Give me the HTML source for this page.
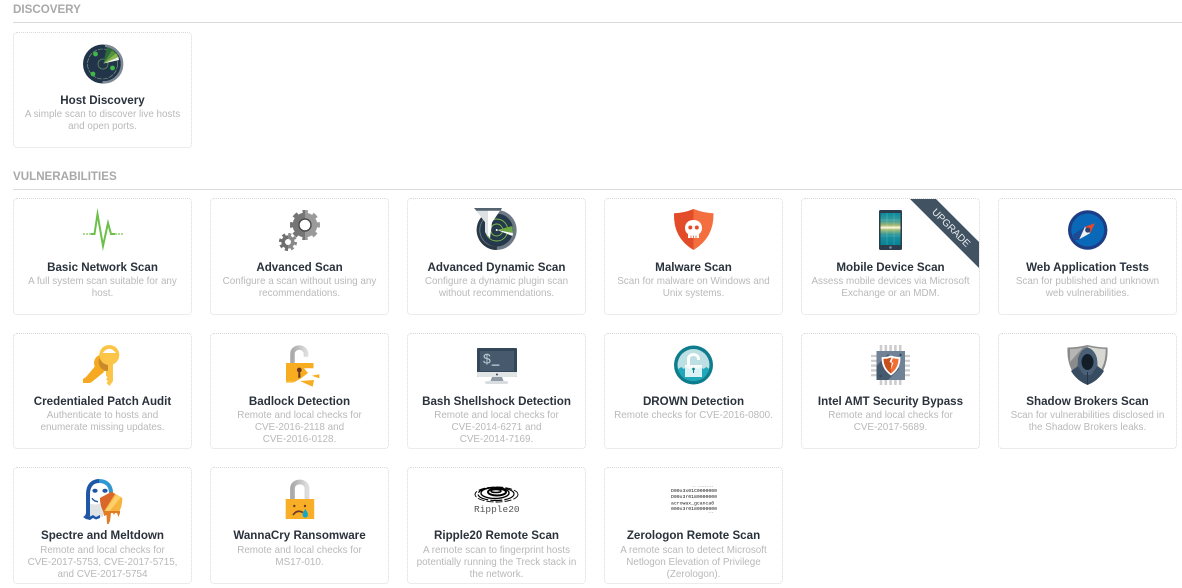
<!DOCTYPE html>
<html><head><meta charset="utf-8"><style>
html,body{margin:0;padding:0;background:#fff;width:1182px;height:588px;overflow:hidden;font-family:"Liberation Sans",sans-serif}
.h{position:absolute;left:13px;width:1169px;height:15px;font-size:11.6px;line-height:15px;font-weight:bold;color:#aaa8a8}
.l{position:absolute;left:13px;width:1169px;height:1px;background:#d9d9d9}
.c{position:absolute;width:179px;height:117px;box-sizing:border-box;border:1px dotted #d8d8d8;border-radius:4px;text-align:center;overflow:hidden}
.c b{position:absolute;left:0;right:0;top:61px;font-size:11.6px;line-height:14px;color:#2a323c;white-space:nowrap}
.c p{position:absolute;left:0;right:0;top:76px;margin:0;font-size:9.88px;line-height:12px;color:#b9b9b9;white-space:nowrap}
.r2 b{top:62px}.r2 p{top:77px}.r4 p{top:77px}
svg.i{position:absolute;left:69px;top:11px;width:40px;height:40px;overflow:visible}
</style></head><body>
<div class="h" style="top:2px">DISCOVERY</div><div class="l" style="top:22px"></div>
<div class="h" style="top:169px">VULNERABILITIES</div><div class="l" style="top:189px"></div>

<div class="c" style="left:13px;top:32px;height:116px">
<svg class="i" viewBox="0 0 40 40"><circle cx="19.500" cy="20" r="19.500" fill="#22344a"/><path d="M22 1.700A18.300 18.300 0 0 1 19.500 38.300" fill="none" stroke="#7c8894" stroke-width="2.600"/><circle cx="19.500" cy="20" r="15" fill="none" stroke="#7fa88a" stroke-width=".6" stroke-dasharray="5 1"/><circle cx="20" cy="20" r="5" fill="none" stroke="#5b8b5b" stroke-width=".8"/><path d="M20.500 19.500L23.700 3Q31 5 35 11Z" fill="#2f6b3a"/><path d="M20.500 19.500L29 6.500 35 11Z" fill="#56933e"/><path d="M20.500 19.500L33 9.500 35.500 13Z" fill="#8ab84f"/><path d="M20.500 19.500L35.500 13 36 16Z" fill="#f2f5ea"/><circle cx="12.500" cy="10" r="2.400" fill="#3fb847"/><circle cx="10" cy="30" r="2.400" fill="#3fb847"/><circle cx="29.500" cy="24" r="2.400" fill="#3fb847"/></svg>
<b>Host Discovery</b><p>A simple scan to discover live hosts<br>and open ports.</p></div>

<div class="c r2" style="left:13px;top:198px">
<svg class="i" viewBox="0 0 40 40"><path d="M0 24H8" stroke="#7cc352" stroke-width="1.200" stroke-dasharray="2 1"/><path d="M32 24H40" stroke="#7cc352" stroke-width="1.200" stroke-dasharray="2 1"/><path d="M8 24H11.500L14.500 4 20 36 25 13 28 24H32" fill="none" stroke="#6cc04a" stroke-width="2" stroke-miterlimit="12"/></svg>
<b>Basic Network Scan</b><p>A full system scan suitable for any<br>host.</p></div>

<div class="c r2" style="left:210px;top:198px">
<svg class="i" viewBox="0 0 40 40"><defs><clipPath id="gl"><rect x="-5" y="-5" width="30" height="50"/></clipPath><clipPath id="gs"><rect x="-5" y="15" width="13" height="35"/></clipPath></defs>
<circle cx="25" cy="15" r="12.300" fill="#9a9a9a"/><circle cx="25" cy="15" r="13.300" fill="none" stroke="#9a9a9a" stroke-width="3.400" stroke-dasharray="5.200 5.250" transform="rotate(-12 25 15)"/>
<g clip-path="url(#gl)"><circle cx="25" cy="15" r="12.300" fill="#757575"/><circle cx="25" cy="15" r="13.300" fill="none" stroke="#757575" stroke-width="3.400" stroke-dasharray="5.200 5.250" transform="rotate(-12 25 15)"/></g>
<circle cx="25" cy="15" r="6" fill="#fff" stroke="#4a4a4a" stroke-width="1.400"/>
<circle cx="8" cy="32" r="6.600" fill="#888"/><circle cx="8" cy="32" r="7.600" fill="none" stroke="#888" stroke-width="2.800" stroke-dasharray="3 2.970"/>
<g clip-path="url(#gs)"><circle cx="8" cy="32" r="6.600" fill="#6f6f6f"/><circle cx="8" cy="32" r="7.600" fill="none" stroke="#6f6f6f" stroke-width="2.800" stroke-dasharray="3 2.970"/></g>
<circle cx="8" cy="32" r="3" fill="#fff"/></svg>
<b>Advanced Scan</b><p>Configure a scan without using any<br>recommendations.</p></div>

<div class="c r2" style="left:407px;top:198px">
<svg class="i" viewBox="0 0 40 40"><circle cx="19.700" cy="20" r="20" fill="#6d7a86"/><path d="M12 1.500A20 20 0 0 0 19.700 40 L20 36.500A16.500 16.500 0 0 1 12 5Z" fill="#2a3745"/><circle cx="19.700" cy="20" r="16.500" fill="#26384b"/><circle cx="19.700" cy="20" r="11" fill="none" stroke="#7dbf4d" stroke-width=".9"/><circle cx="19.700" cy="20" r="6" fill="none" stroke="#7dbf4d" stroke-width=".9"/><path d="M20 20L35.500 16 36 23Z" fill="#6da844"/><path d="M20 20L36 23 35.500 26Z" fill="#fff"/><circle cx="19.700" cy="20" r="1" fill="#fff"/><path d="M-3-1.700H24.700L15 12.500 13 28.300 8 22V12Z" fill="#fff"/><path d="M-3-1.700H11V26.500L8 22V12Z" fill="#dde1e3"/><path d="M-3-2H25L23.500.8H-.5Z" fill="#55626f"/></svg>
<b>Advanced Dynamic Scan</b><p>Configure a dynamic plugin scan<br>without recommendations.</p></div>

<div class="c r2" style="left:604px;top:198px">
<svg class="i" viewBox="0 0 40 40"><path d="M19.500-1Q10 3 0 3.300-1 28 19.500 40Z" fill="#e24c29"/><path d="M19.500-1Q30 3 39.500 3.300 40 28 19.500 40Z" fill="#f46f3f"/><path d="M19.500 10C14 10 11 13.500 11 18 11 21 12.500 23 14 24V28H25V24C26.500 23 28 21 28 18 28 13.500 25 10 19.500 10Z" fill="#fff"/><circle cx="16.300" cy="17.500" r="2" fill="#e24c29"/><circle cx="22.800" cy="17.500" r="2" fill="#e24c29"/><path d="M17 25.500V28M19.500 25.500V28M22 25.500V28" stroke="#e24c29" stroke-width=".7"/></svg>
<b>Malware Scan</b><p>Scan for malware on Windows and<br>Unix systems.</p></div>

<div class="c r2" style="left:801px;top:198px">
<svg class="i" viewBox="0 0 40 40"><defs><linearGradient id="g1" x1="0" y1="0" x2="0" y2="1"><stop offset="0" stop-color="#098b9e"/><stop offset=".25" stop-color="#3b9f9a"/><stop offset=".38" stop-color="#a4b671"/><stop offset=".46" stop-color="#fffbe0"/><stop offset=".52" stop-color="#a7bf7a"/><stop offset=".7" stop-color="#1c919f"/><stop offset="1" stop-color="#078397"/></linearGradient></defs><rect x="8" y="0" width="23" height="40" rx="1.500" fill="#2c3d4d"/><rect x="9.500" y="3" width="20" height="32" fill="url(#g1)"/><path d="M16 3V35M23 3V35" stroke="#fff" stroke-opacity=".15"/><path d="M9.500 10H29.500M9.500 26H29.500" stroke="#fff" stroke-opacity=".15"/><circle cx="19.500" cy="37.500" r="1.200" fill="#8a98a5"/></svg>
<svg style="position:absolute;left:0;top:0;width:177px;height:115px" viewBox="0 0 177 115"><path d="M107-1H133L178 44V70Z" fill="#415262"/><text x="149" y="32" transform="rotate(45 149 29)" font-family="'Liberation Sans',sans-serif" font-size="10" fill="#e8ecef" text-anchor="middle">UPGRADE</text></svg>
<b>Mobile Device Scan</b><p>Assess mobile devices via Microsoft<br>Exchange or an MDM.</p></div>

<div class="c r2" style="left:998px;top:198px">
<svg class="i" viewBox="0 0 40 40"><circle cx="19.700" cy="20" r="19.700" fill="#1d3d86"/><circle cx="19.700" cy="20" r="16.500" fill="#0a68b8"/><path d="M4.700 25L17 16.700 11.300 30 6.500 30Z" fill="#1d4a95"/><path d="M27 13.300L17 16.700 22 23.300Z" fill="#e8472a"/><path d="M11.300 29.300L17 16.700 22 23.300Z" fill="#eef1f3"/><circle cx="19.700" cy="20" r="2.600" fill="#2a4372"/></svg>
<b>Web Application Tests</b><p>Scan for published and unknown<br>web vulnerabilities.</p></div>

<div class="c" style="left:13px;top:333px;height:116px">
<svg class="i" viewBox="0 0 40 40"><path d="M14 19L21 27 10 36 7 38H0V34L3 32Z" fill="#f6a821"/><circle cx="19.500" cy="18" r="8.500" fill="#f6a821"/><path d="M23 14H30V36L26.500 41 23.500 38 25 36 23 34.500 24.500 32.500 23 30.500Z" fill="#fcc547"/><path d="M19 10A9 9 0 0 0 25 26V18A10 10 0 0 1 19 10Z" fill="#c98a2c"/><circle cx="26.300" cy="10" r="10" fill="#fcc547"/><path d="M19.700 8Q26.300-.5 33 8Z" fill="#fff"/></svg>
<b>Credentialed Patch Audit</b><p>Authenticate to hosts and<br>enumerate missing updates.</p></div>

<div class="c" style="left:210px;top:333px;height:116px">
<svg class="i" viewBox="0 0 40 40"><defs><linearGradient id="sh" x1="0" y1="0" x2="1" y2="0"><stop offset="0" stop-color="#aaa"/><stop offset="1" stop-color="#ddd"/></linearGradient></defs><path d="M12.500 18V9C12.500 .5 26 .5 26 9V11.700" fill="none" stroke="url(#sh)" stroke-width="4.600"/><path d="M6 18H33.500V23.300H24L28 28 20 34 13 37.700H6Z" fill="#f8ac1f"/><path d="M31.700 30.700L39.300 29.300V33.300Z" fill="#f8ac1f"/><path d="M20 36L34 35 32.700 41.700Z" fill="#f8ac1f"/><path d="M6 36.500H16L13 37.700H6Z" fill="#fcd177"/><circle cx="19.300" cy="25" r="2.400" fill="#6d3b24"/><path d="M18.500 25H20.100L20.500 32.700H18.100Z" fill="#6d3b24"/></svg>
<b>Badlock Detection</b><p>Remote and local checks for<br>CVE-2016-2118 and<br>CVE-2016-0128.</p></div>

<div class="c" style="left:407px;top:333px;height:116px">
<svg class="i" viewBox="0 0 40 40"><rect x="0" y="3" width="40" height="29" rx="1" fill="#34465a"/><rect x="3" y="6" width="34" height="20" fill="#475a6d"/><path d="M0 27H40V31A1 1 0 0 1 39 32H1A1 1 0 0 1 0 31Z" fill="#dfe4e4"/><path d="M15 32H25L26.500 36H13.500Z" fill="#8f9aa5"/><rect x="8" y="36" width="23" height="3" rx="1.500" fill="#d9dddf"/><circle cx="20" cy="29.500" r="1" fill="#34465a"/><text x="6" y="18.500" font-family="'Liberation Sans',sans-serif" font-size="14" fill="#b9cfd6">$</text><rect x="14.700" y="19.500" width="7.700" height="1.300" fill="#b9cfd6"/></svg>
<b>Bash Shellshock Detection</b><p>Remote and local checks for<br>CVE-2014-6271 and<br>CVE-2014-7169.</p></div>

<div class="c" style="left:604px;top:333px;height:116px">
<svg class="i" viewBox="0 0 40 40"><circle cx="19.500" cy="20" r="19.500" fill="#0d7c8c"/><circle cx="19.500" cy="20" r="16" fill="#bcdfe4"/><path d="M4 24L7.500 22 9.500 24 12.500 22 15.500 24 19.500 22 23.500 24 26.500 22 29.500 24 32.500 22 35 24A16 16 0 0 1 4 24Z" fill="#1fa8ba"/><rect x="11" y="20" width="17" height="12" fill="#fff" fill-opacity=".85"/><path d="M14.500 20V14C14.500 8 24.500 8 24.500 14V15" fill="none" stroke="#fff" stroke-width="3"/><circle cx="19.500" cy="24" r="1.300" fill="#0d7c8c"/><path d="M19 24H20V28H19Z" fill="#0d7c8c"/></svg>
<b>DROWN Detection</b><p>Remote checks for CVE-2016-0800.</p></div>

<div class="c" style="left:801px;top:333px;height:116px">
<svg class="i" viewBox="0 0 40 40"><path d="M10 0V40M14.800 0V40M19.600 0V40M24.400 0V40M29.200 0V40" stroke="#cdcdcd" stroke-width="2.600"/><path d="M0 11H39M0 15.800H39M0 20.600H39M0 25.400H39M0 30.200H39" stroke="#cdcdcd" stroke-width="2.200"/><rect x="5.500" y="6" width="28.500" height="29" fill="#708396"/><path d="M5.500 35V21L17 9 28 24 17 35Z" fill="#455a6e"/><circle cx="29.500" cy="10" r="1.200" fill="#34465a"/><circle cx="9.500" cy="31" r="1.200" fill="#34465a"/><path d="M20 10.500Q25 12.500 29.300 12 30 24 20 30.500 10 24 10.700 12 15 12.500 20 10.500Z" fill="#fff"/><path d="M20 12.500Q24 14 27.500 13.800 27.500 23 20 28.500Z" fill="#f26e33"/><path d="M20 12.500Q16 14 12.500 13.800 12.500 23 20 28.500Z" fill="#c94f1e"/><path d="M21 11.500L18.500 17 21 18 19.500 25 22.500 18 20.500 17 22 12.500Z" fill="#fff"/></svg>
<b>Intel AMT Security Bypass</b><p>Remote and local checks for<br>CVE-2017-5689.</p></div>

<div class="c" style="left:998px;top:333px;height:116px">
<svg class="i" viewBox="0 0 40 40"><path d="M19.500 0Q30 2.500 39.500 2.500 41 29 19.500 40-2 29-.5 2.500 9 2.500 19.500 0Z" fill="#8b8b8b"/><path d="M19.500 1.500Q29 3.800 37.700 4 38 26 22 36H19.500Z" fill="#d8d8d3"/><path d="M2 4Q9 4 15 2.500L2 17Z" fill="#b5b5b5"/><path d="M19.500 2.500Q27 5 29 14L29.500 21 36 26Q30 36 19.500 40 9 36 3 26L10 21 10 14Q12 5 19.500 2.500Z" fill="#384c61"/><path d="M19.500 2.500Q27 5 29 14L29.500 21 23 30H16L9.500 21 10 14Q12 5 19.500 2.500Z" fill="#4a6076"/><ellipse cx="19.500" cy="17" rx="6" ry="8" fill="#141e29"/><path d="M19.500 27V39.500" stroke="#25364a" stroke-width="1"/></svg>
<b>Shadow Brokers Scan</b><p>Scan for vulnerabilities disclosed in<br>the Shadow Brokers leaks.</p></div>

<div class="c r4" style="left:13px;top:467px">
<svg class="i" viewBox="0 0 40 40"><path d="M5 38V15C5-2 28-2 28 15V38Z" fill="#fff"/><path d="M5 24Q12 27 20 24V38H5Z" fill="#e0e4e5"/><path d="M5 37V15C5 6 10 2 16 2" fill="none" stroke="#1f56a5" stroke-width="4"/><path d="M16 2C23 2 28 6 28 14" fill="none" stroke="#2f97d2" stroke-width="4"/><path d="M0 38Q2.500 37 3 34L7 37.500 10 36 13 38 17 36 17 39 13 40.500 10 39 7 41 3 40Z" fill="#1f56a5"/><ellipse cx="12" cy="11.700" rx="2.600" ry="2" fill="#1f56a5"/><ellipse cx="22" cy="11.700" rx="2.600" ry="2" fill="#1f56a5"/><path d="M9 19.300Q11 22.500 15 22.700" fill="none" stroke="#1f56a5" stroke-width="1.400"/><path d="M28.700 12.700L39.300 19C39.300 27 37 32 35 34H21C19 30 17 25 17 19Z" fill="#f6b43e"/><path d="M28.700 12.700L17 19C17 25 18.500 29 20.500 33L32 15Z" fill="#d9662a"/><path d="M33 16L38 18 25 34H21Z" fill="#fcd06a"/><path d="M20 32H37V34L35.500 38 34 34H32L31 36 30 34H28L27 42 25.500 45H24L23.500 36 21 37Z" fill="#e17c26"/></svg>
<b>Spectre and Meltdown</b><p>Remote and local checks for<br>CVE-2017-5753, CVE-2017-5715,<br>and CVE-2017-5754</p></div>

<div class="c r4" style="left:210px;top:467px">
<svg class="i" viewBox="0 0 40 40"><defs><linearGradient id="sh2" x1="0" y1="0" x2="1" y2="0"><stop offset="0" stop-color="#aaa"/><stop offset="1" stop-color="#ddd"/></linearGradient></defs><path d="M12.500 20V9.500C12.500 .8 27 .8 27 9.500V20" fill="none" stroke="url(#sh2)" stroke-width="4.800"/><rect x="5.700" y="20" width="28.500" height="20" fill="#f8ae27"/><circle cx="14.300" cy="27" r="1.200" fill="#6d3b24"/><circle cx="25" cy="27" r="1.200" fill="#6d3b24"/><path d="M13 36Q17 30 23 33.500" fill="none" stroke="#6d3b24" stroke-width="1.700"/><path d="M25.300 30Q21.500 35 23 37.500 25.300 39.800 27.500 37.500 29 35 25.300 30Z" fill="#12a8c5"/></svg>
<b>WannaCry Ransomware</b><p>Remote and local checks for<br>MS17-010.</p></div>

<div class="c r4" style="left:407px;top:467px">
<svg class="i" viewBox="0 0 40 40"><g fill="none" stroke="#000" transform="translate(0 1)"><ellipse cx="19.500" cy="14.500" rx="21.500" ry="7.500" stroke-width=".9" stroke-dasharray="7 2"/><ellipse cx="19" cy="14" rx="18" ry="6.500" stroke-width="1.200" stroke-dasharray="12 2"/><ellipse cx="18" cy="13" rx="14" ry="5.500" stroke-width="1.400"/><ellipse cx="20" cy="12" rx="9" ry="3.500" stroke-width="2"/><ellipse cx="19" cy="11" rx="5" ry="1.500" stroke-width="1.500"/></g><text x="-3" y="33" font-family="'Liberation Mono',monospace" font-size="9.500" fill="#555">Ripple20</text></svg>
<b>Ripple20 Remote Scan</b><p>A remote scan to fingerprint hosts<br>potentially running the Treck stack in<br>the network.</p></div>

<div class="c r4" style="left:604px;top:467px">
<svg class="i" viewBox="0 0 40 40" font-family="'Liberation Mono',monospace" font-size="4.800" fill="#111"><text x="18" y="8" font-size="3">-- ---------</text><text x="-3" y="13">D00x3x01C0000000</text><text x="-3" y="19">D00x3r0180000000</text><text x="-3" y="25.500">acrowax_gcanca0</text><text x="-3" y="31">000x3r0180000000</text><text x="34" y="34" font-size="3">---</text></svg>
<b>Zerologon Remote Scan</b><p>A remote scan to detect Microsoft<br>Netlogon Elevation of Privilege<br>(Zerologon).</p></div>
</body></html>
